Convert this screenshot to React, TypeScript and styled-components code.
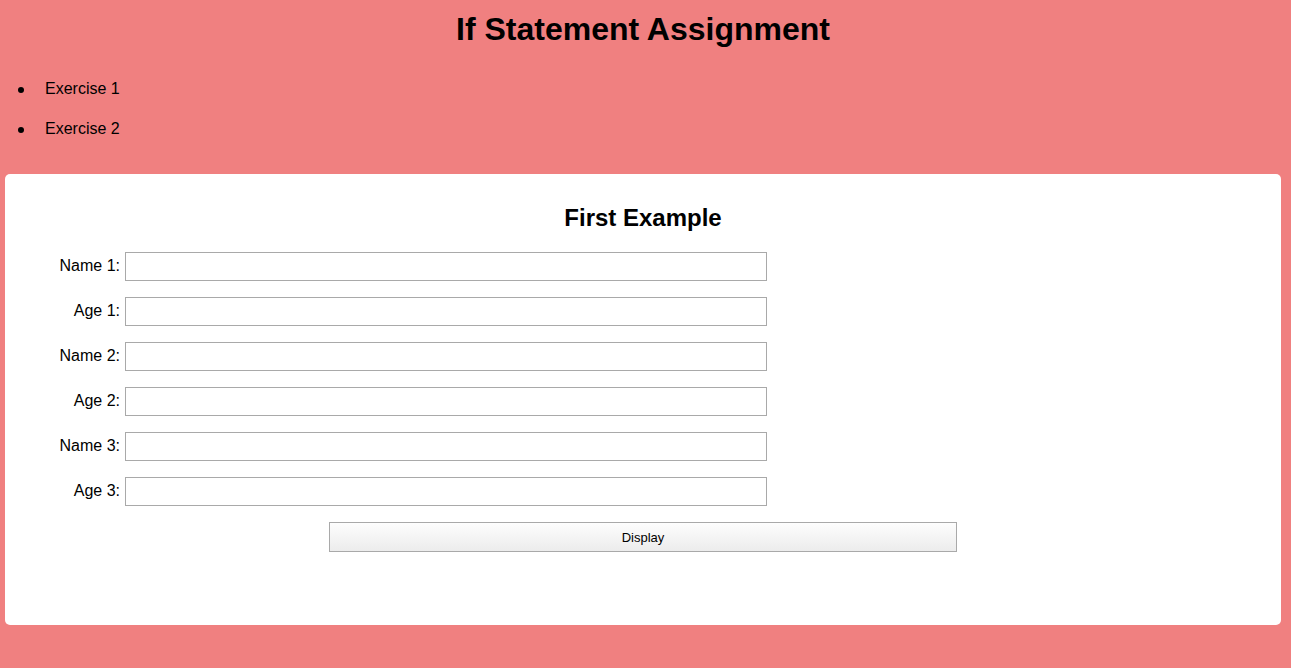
import React from "react";
import styled, { createGlobalStyle } from "styled-components";

const GlobalStyle = createGlobalStyle`
  html, body {
    margin: 0;
    padding: 0;
    background: #f08080;
    font-family: "Liberation Sans", Arial, sans-serif;
    color: #000;
  }
  body {
    min-height: 668px;
  }
`;

const Page = styled.div`
  padding: 0 10px 0 5px;
  box-sizing: border-box;
  width: 1291px;
`;

const Title = styled.h1`
  margin: 11px 0 0;
  font-size: 32px;
  line-height: 37px;
  font-weight: bold;
  text-align: center;
`;

const NavList = styled.ul`
  margin: 32px 0 0;
  padding-left: 13px;
  list-style: none;
`;

const NavItem = styled.li`
  display: flex;
  align-items: center;
  font-size: 16px;
  line-height: 18px;
  &::before {
    content: "";
    width: 6px;
    height: 6px;
    border-radius: 50%;
    background: #000;
    margin-right: 21px;
    margin-top: 1px;
  }
  & + & {
    margin-top: 22px;
  }
`;

const Card = styled.section`
  margin-top: 36px;
  background: #fff;
  border-radius: 5px;
  height: 451px;
  box-sizing: border-box;
  padding-top: 30px;
`;

const CardTitle = styled.h2`
  margin: 0 0 20px;
  font-size: 24px;
  line-height: 28px;
  font-weight: bold;
  text-align: center;
`;

const FormGrid = styled.div`
  display: grid;
  grid-template-columns: 115px 642px;
  column-gap: 5px;
  row-gap: 16px;
  align-items: center;
`;

const Label = styled.label`
  font-size: 16px;
  line-height: 18px;
  text-align: right;
  white-space: nowrap;
  margin-top: -2px;
`;

const Input = styled.input`
  box-sizing: border-box;
  width: 642px;
  height: 29px;
  margin: 0;
  border: 1px solid #a9a9a9;
  background: #fff;
  font-family: "Liberation Sans", Arial, sans-serif;
  font-size: 14px;
  padding: 2px 4px;
  outline: none;
`;

const ButtonRow = styled.div`
  display: flex;
  justify-content: center;
  margin-top: 16px;
`;

const DisplayButton = styled.button`
  box-sizing: border-box;
  width: 628px;
  height: 30px;
  margin: 0;
  border: 1px solid #a9a9a9;
  border-radius: 0;
  background: linear-gradient(to bottom, #fdfdfd, #ececec);
  font-family: "Liberation Sans", Arial, sans-serif;
  font-size: 13px;
  color: #000;
  cursor: pointer;
`;

const fields = ["Name 1", "Age 1", "Name 2", "Age 2", "Name 3", "Age 3"];

export default function App() {
  return (
    <>
      <GlobalStyle />
      <Page>
        <Title>If Statement Assignment</Title>
        <NavList>
          <NavItem>Exercise 1</NavItem>
          <NavItem>Exercise 2</NavItem>
        </NavList>
        <Card>
          <CardTitle>First Example</CardTitle>
          <FormGrid>
            {fields.map((f) => (
              <React.Fragment key={f}>
                <Label htmlFor={f}>{f}:</Label>
                <Input id={f} type="text" />
              </React.Fragment>
            ))}
          </FormGrid>
          <ButtonRow>
            <DisplayButton type="button">Display</DisplayButton>
          </ButtonRow>
        </Card>
      </Page>
    </>
  );
}
